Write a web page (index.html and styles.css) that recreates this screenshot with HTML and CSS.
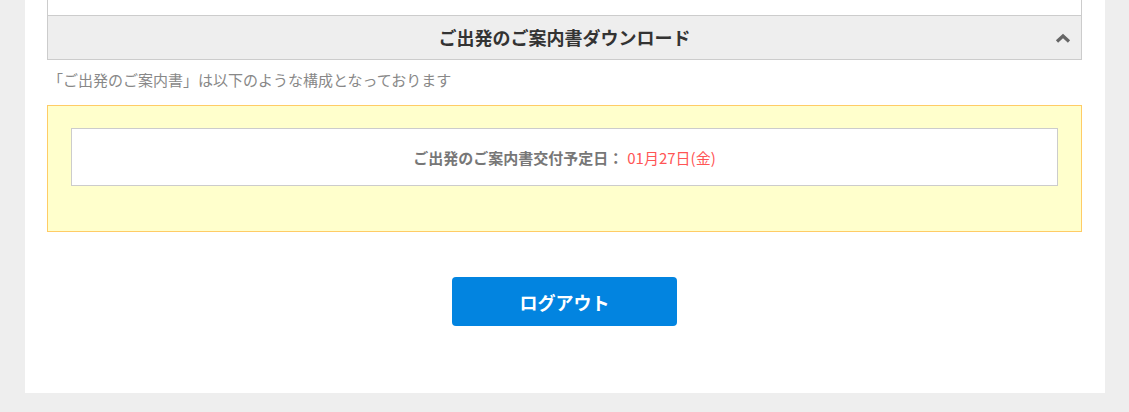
FILE: index.html
```html
<!DOCTYPE html>
<html lang="ja">
<head>
    <meta charset="UTF-8">
    <meta name="viewport" content="width=device-width, initial-scale=1.0">
    <title>ご出発のご案内書ダウンロード</title>
    <link rel="stylesheet" href="styles.css">
</head>
<body>
    <div class="container">
        <div class="prev-box"></div>
        <div class="accordion">
            <div class="accordion-head">
                <span class="accordion-title">ご出発のご案内書ダウンロード</span>
                <svg class="chevron" width="16" height="10" viewBox="0 0 16 10">
                    <polyline points="2,8.5 8,3 14,8.5" fill="none" stroke="#666" stroke-width="3.2"/>
                </svg>
            </div>
            <p class="lead">「ご出発のご案内書」は以下のような構成となっております</p>
            <div class="notice">
                <div class="notice-inner">
                    <span class="notice-label">ご出発のご案内書交付予定日：</span><span class="notice-date">01月27日(金)</span>
                </div>
            </div>
        </div>
        <div class="actions">
            <a href="#" class="btn-logout">ログアウト</a>
        </div>
    </div>
</body>
</html>
```

FILE: styles.css
```css
body {
    margin: 0;
    padding: 0;
    background: #eeeeee;
    font-family: "Noto Sans CJK JP", "Noto Sans", sans-serif;
    color: #333333;
}
.container {
    background: #ffffff;
    width: 1080px;
    margin: 0 0 0 25px;
    padding: 0 23px 67px 22px;
    box-sizing: border-box;
}
.prev-box {
    height: 15px;
    border-left: 1px solid #cccccc;
    border-right: 1px solid #cccccc;
}
.accordion-head {
    position: relative;
    background: #eeeeee;
    border: 1px solid #cccccc;
    height: 43px;
    padding-bottom: 2px;
    box-sizing: border-box;
    height: 45px;
    display: flex;
    align-items: center;
    justify-content: center;
}
.accordion-title {
    font-size: 18px;
    font-weight: bold;
    line-height: 1;
    color: #333333;
}
.chevron {
    position: absolute;
    right: 10px;
    top: 17px;
}
.lead {
    margin: 0;
    padding: 9px 0 0 1px;
    height: 36px;
    box-sizing: border-box;
    height: 45px;
    font-size: 15px;
    line-height: 21px;
    color: #888888;
}
.notice {
    background: #ffffcc;
    border: 1px solid #ffcc66;
    padding: 22px 23px 45px 23px;
}
.notice-inner {
    background: #ffffff;
    border: 1px solid #cccccc;
    height: 56px;
    display: flex;
    align-items: center;
    justify-content: center;
    font-size: 15px;
    line-height: 1;
}
.notice-label {
    font-weight: bold;
    color: #777777;
}
.notice-date {
    margin-left: 4px;
    color: #ff5555;
}
.actions {
    display: flex;
    justify-content: center;
    padding-top: 45px;
}
.btn-logout {
    display: flex;
    align-items: center;
    justify-content: center;
    width: 225px;
    height: 49px;
    background: #0284e0;
    border-radius: 4px;
    color: #ffffff;
    font-size: 18px;
    font-weight: bold;
    text-decoration: none;
}
```
